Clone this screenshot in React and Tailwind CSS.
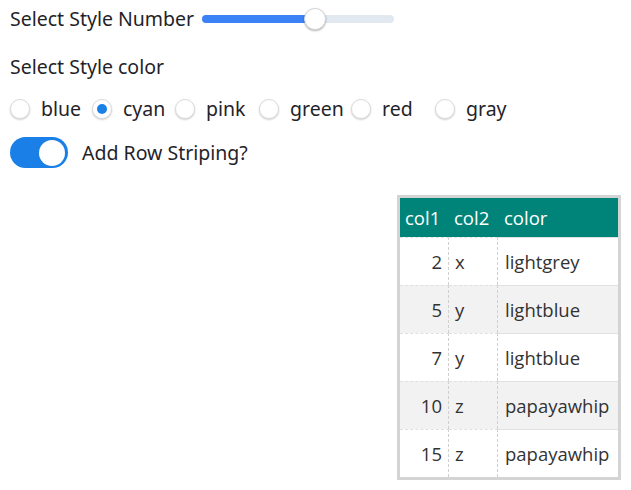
import { useState } from 'react'

const colors = [
  { name: 'blue', w: 'w-[82px]' },
  { name: 'cyan', w: 'w-[83px]' },
  { name: 'pink', w: 'w-[84px]' },
  { name: 'green', w: 'w-[92px]' },
  { name: 'red', w: 'w-[84px]' },
  { name: 'gray', w: 'w-[84px]' },
]

const rows = [
  { c1: 2, c2: 'x', color: 'lightgrey' },
  { c1: 5, c2: 'y', color: 'lightblue' },
  { c1: 7, c2: 'y', color: 'lightblue' },
  { c1: 10, c2: 'z', color: 'papayawhip' },
  { c1: 15, c2: 'z', color: 'papayawhip' },
]

export default function App() {
  const [picked, setPicked] = useState('cyan')
  const [striped, setStriped] = useState(true)

  return (
    <div className="w-[631px] h-[490px] bg-white px-[10px] pt-[5px] text-[#1f2329] font-['Noto_Sans',sans-serif] text-[19.5px]">
      <div className="flex items-center h-[28px]">
        <span className="w-[192px] shrink-0 whitespace-nowrap">Select Style Number</span>
        <div className="relative w-[192px] h-[8px] rounded-full bg-[#e2e8f0]">
          <div className="h-full w-[113px] rounded-full bg-[#3b82f6]" />
          <div className="absolute left-[102px] top-[-7px] w-[22px] h-[22px] rounded-full bg-white border border-[#d6d6d6] shadow-[0_1px_2px_rgba(0,0,0,0.3)]" />
        </div>
      </div>

      <div className="flex items-center h-[28px] mt-[20px]">Select Style color</div>

      <div className="flex items-center h-[28px] mt-[14px]">
        {colors.map(c => (
          <label key={c.name} className={`flex items-center ${c.w} shrink-0 cursor-pointer`} onClick={() => setPicked(c.name)}>
            <span className="w-[20px] h-[20px] rounded-full bg-white border border-[#dcdcdc] shadow-[0_1px_2px_rgba(0,0,0,0.2)] flex items-center justify-center">
              {picked === c.name && <span className="w-[10px] h-[10px] rounded-full bg-[#1a7fe6]" />}
            </span>
            <span className="ml-[11px]">{c.name}</span>
          </label>
        ))}
      </div>

      <div className="flex items-center h-[31px] mt-[14px]">
        <button
          onClick={() => setStriped(!striped)}
          className={`w-[58px] h-[31px] rounded-full flex items-center px-[3px] ${striped ? 'bg-[#1a7fe6] justify-end' : 'bg-[#d1d5db] justify-start'}`}
        >
          <span className="w-[26px] h-[26px] rounded-full bg-white" />
        </button>
        <span className="ml-[14px]">Add Row Striping?</span>
      </div>

      <div className="flex justify-end mt-[27px]">
        <table className="border-[3px] border-[#d4d4d4] border-separate border-spacing-0 font-['Open_Sans',sans-serif] text-[18.5px] text-[#333]">
          <thead>
            <tr className="bg-[#008479] text-white h-[39px]">
              <th className="w-[49px] text-left font-normal pl-[5px]">col1</th>
              <th className="w-[49px] text-left font-normal pl-[5px]">col2</th>
              <th className="w-[120px] text-left font-normal pl-[6px]">color</th>
            </tr>
          </thead>
          <tbody>
            {rows.map((r, i) => (
              <tr key={i} className={`h-[48px] ${striped && i % 2 === 1 ? 'bg-[#f2f2f2]' : 'bg-white'}`}>
                <td className="text-right pr-[6px] border-t border-t-[#e0e0e0] border-r border-dashed border-r-[#cfcfcf]">{r.c1}</td>
                <td className="pl-[6px] border-t border-t-[#e0e0e0] border-r border-dashed border-r-[#cfcfcf]">{r.c2}</td>
                <td className="pl-[7px] border-t border-t-[#e0e0e0]">{r.color}</td>
              </tr>
            ))}
          </tbody>
        </table>
      </div>
    </div>
  )
}
